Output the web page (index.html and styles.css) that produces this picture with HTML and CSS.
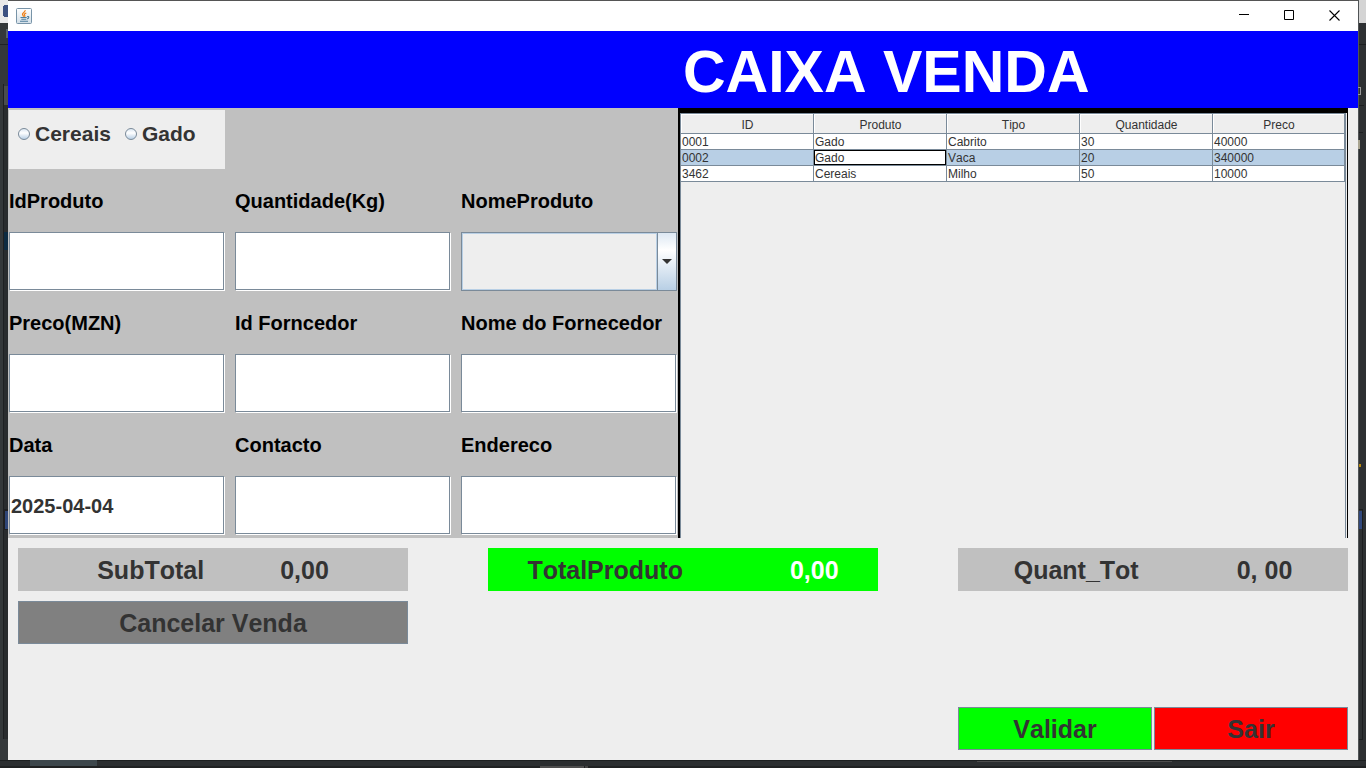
FILE: index.html
```html
<!DOCTYPE html>
<html lang="pt">
<head>
<meta charset="utf-8">
<title>Caixa Venda</title>
<link rel="stylesheet" href="styles.css">
</head>
<body class="desktop">
<svg class="edge edge-left" width="8" height="768" viewBox="0 0 8 768" aria-hidden="true" shape-rendering="crispEdges">
  <rect width="8" height="23" fill="#e9e9e9"/>
  <rect x="3" y="5" width="6" height="12" rx="3" fill="#3d5282"/>
  <rect y="23" width="8" height="745" fill="#34383a"/>
  <rect x="6" y="29" width="2" height="9" fill="#5a6470"/>
  <rect y="44" width="8" height="1" fill="#202224"/>
  <rect x="3" y="84" width="1" height="655" fill="#1e2022"/>
  <rect x="4" y="86" width="4" height="19" fill="#4a4d4e"/>
  <rect x="4" y="105" width="4" height="634" fill="#292c2e"/>
  <rect x="4" y="232" width="4" height="18" fill="#0d2b42"/>
  <rect x="4" y="509" width="4" height="21" fill="#1e2022"/>
  <rect x="5" y="511" width="3" height="18" fill="#2e4678"/>
</svg>
<svg class="edge edge-right" width="8" height="768" viewBox="0 0 8 768" aria-hidden="true" shape-rendering="crispEdges">
  <rect width="8" height="23" fill="#d4d4d4"/>
  <rect y="23" width="8" height="745" fill="#2d3032"/>
  <rect width="1" height="768" fill="#505456"/>
  <path d="M1 44h7M1 105h5M1 132h4" stroke="#1c1e20"/>
  <path d="M0 87.500h2.500v7h-2.500" fill="none" stroke="#999"/>
  <rect y="140" width="2" height="9" fill="#a8a490"/>
  <rect x="1" y="464" width="2" height="3" fill="#b8890c"/>
  <path d="M1 509.500h3.500v230h-3.500" fill="none" stroke="#1c1e20"/>
  <rect x="1" y="511" width="3" height="18" fill="#30487c"/>
</svg>
<div class="window">
  <header class="titlebar">
    <svg width="16" height="16" viewBox="0 0 16 16" role="img" aria-label="Java">
      <defs><linearGradient id="ic" x2="0" y2="1"><stop stop-color="#fff"/><stop offset="1" stop-color="#d3dfe8"/></linearGradient></defs>
      <rect x=".5" y=".5" width="15" height="15" rx="1" fill="url(#ic)" stroke="#7894a8"/>
      <path d="M9.200 2.200C9.500 4 6.200 4.800 6.500 6.400c.1.900 1 1.300 1 2.300M10.300 5C8.500 5.600 7.900 6.400 8.700 7.300c.4.600.2 1-.2 1.500" fill="none" stroke="#ef7d12" stroke-width="1.200"/>
      <path d="M4.500 9.500h6.200M5.300 11.200h5M4 13.200h8M11 8.700c2-.8 2.800 1.200.1 2.300" fill="none" stroke="#4f7f9e" stroke-width="1.100"/>
    </svg>
    <div class="controls">
      <button class="control" type="button" aria-label="Minimizar"><svg width="11" height="11" viewBox="0 0 11 11"><path d="M0 4.500h10" stroke="#000"/></svg></button>
      <button class="control" type="button" aria-label="Maximizar"><svg width="11" height="11" viewBox="0 0 11 11"><path d="M.5.500h9v9h-9z" fill="none" stroke="#000"/></svg></button>
      <button class="control" type="button" aria-label="Fechar"><svg width="11" height="11" viewBox="0 0 11 11"><path d="M.5.500l10 10M10.500.500l-10 10" stroke="#000" stroke-width="1.100"/></svg></button>
    </div>
  </header>
  <div class="banner"><h1 class="banner-title">CAIXA VENDA</h1></div>
  <main class="content">
    <form class="form">
      <div class="kinds">
        <label class="kind"><input class="radio" type="radio" name="kind">Cereais</label>
        <label class="kind"><input class="radio" type="radio" name="kind">Gado</label>
      </div>
      <label class="label first" for="id">IdProduto</label>
      <label class="label" for="qty">Quantidade(Kg)</label>
      <label class="label" for="name">NomeProduto</label>
      <input class="field" id="id" type="text">
      <input class="field" id="qty" type="text">
      <div class="combo">
        <select class="select" id="name"><option></option></select>
        <svg class="combo-arrow" width="10" height="5" viewBox="0 0 10 5" aria-hidden="true"><path d="M0 0h10L5 5z" fill="#333"/></svg>
      </div>
      <label class="label" for="price">Preco(MZN)</label>
      <label class="label" for="supplier-id">Id Forncedor</label>
      <label class="label" for="supplier">Nome do Fornecedor</label>
      <input class="field" id="price" type="text">
      <input class="field" id="supplier-id" type="text">
      <input class="field" id="supplier" type="text">
      <label class="label" for="date">Data</label>
      <label class="label" for="contact">Contacto</label>
      <label class="label" for="address">Endereco</label>
      <input class="field" id="date" type="text" value="2025-04-04">
      <input class="field" id="contact" type="text">
      <input class="field" id="address" type="text">
    </form>
    <section class="list">
      <div class="scroll">
        <table class="table">
          <thead><tr><th>ID</th><th>Produto</th><th>Tipo</th><th>Quantidade</th><th>Preco</th></tr></thead>
          <tbody>
            <tr><td>0001</td><td>Gado</td><td>Cabrito</td><td>30</td><td>40000</td></tr>
            <tr class="selected"><td>0002</td><td class="focused">Gado</td><td>Vaca</td><td>20</td><td>340000</td></tr>
            <tr><td>3462</td><td>Cereais</td><td>Milho</td><td>50</td><td>10000</td></tr>
          </tbody>
        </table>
      </div>
    </section>
  </main>
  <footer class="summary">
    <div class="total total-sub"><span>SubTotal</span><span>0,00</span></div>
    <div class="total total-product"><span>TotalProduto</span><span class="amount">0,00</span></div>
    <div class="total total-quantity"><span>Quant_Tot</span><span>0, 00</span></div>
    <button class="button cancel" type="button">Cancelar Venda</button>
    <div class="actions">
      <button class="button confirm" type="button">Validar</button>
      <button class="button exit" type="button">Sair</button>
    </div>
  </footer>
</div>
<svg class="edge edge-bottom" width="1366" height="8" viewBox="0 0 1366 8" aria-hidden="true" shape-rendering="crispEdges">
  <rect width="1366" height="8" fill="#2b2e30"/>
  <rect width="1366" height="1" fill="#1c1f20"/>
  <rect y="6" width="1366" height="2" fill="#1f2122"/>
  <rect x="30" width="67" height="6" fill="#3d474c"/>
  <rect x="977" y="1" width="195" height="1" fill="#4c4c4c"/>
  <rect x="540" y="6" width="44" height="2" fill="#4e4e4e"/>
  <rect x="585" y="6" width="3" height="2" fill="#444"/>
</svg>
</body>
</html>
```
FILE: styles.css
```css
* {
  box-sizing: border-box;
}

.desktop {
  display: flex;
  flex-direction: column;
  position: relative;
  min-height: 100vh;
  margin: 0;
  padding: 0 8px 8px;
  overflow: hidden;
  background: #2d3032;
  font-family: "Liberation Sans", Arial, sans-serif;
  font-kerning: none;
  color: #333;
}

/* Slivers of the editor behind the window */
.edge {
  position: absolute;
}

.edge-left {
  top: 0;
  left: 0;
}

.edge-right {
  top: 0;
  right: 0;
}

.edge-bottom {
  bottom: 0;
  left: 0;
}

.window {
  display: flex;
  flex: 1;
  flex-direction: column;
  border-top: 1px solid #555;
  background: #eee;
}

.titlebar {
  display: flex;
  align-items: center;
  justify-content: space-between;
  height: 30px;
  padding: 0 1px 0 8px;
  background: #fff;
}

.controls {
  display: flex;
  height: 100%;
  padding-bottom: 1px;
}

.control {
  display: flex;
  align-items: center;
  justify-content: center;
  width: 45px;
  padding: 0;
  border: 0;
  background: none;
}

.banner {
  display: grid;
  grid-template-columns: 1fr 1fr;
  align-items: center;
  height: 77px;
  padding-top: 4px;
  background: #00f;
}

.banner-title {
  grid-column: 2;
  margin: 0;
  color: #fff;
  font-size: 59px;
  line-height: 72px;
  white-space: nowrap;
}

.content {
  display: grid;
  grid-template-columns: 1fr 1fr;
  padding-right: 10px;
}

.form {
  display: grid;
  grid-template-columns: repeat(3, minmax(0, 1fr));
  grid-auto-rows: 59px;
  gap: 2px 10px;
  padding: 2px 1px 3px;
  background: silver;
}

.kinds {
  display: flex;
  align-items: flex-start;
  gap: 14px;
  padding: 12px 9px;
  background: #eee;
}

.kind {
  display: flex;
  align-items: center;
  gap: 5px;
  font-size: 21px;
  font-weight: bold;
  line-height: 24px;
}

.radio {
  width: 12px;
  height: 12px;
  margin: 0;
  border: 1px solid #7a8a99;
  border-radius: 50%;
  appearance: none;
  background: linear-gradient(#dde8f3, #fff 40%, #b8cfe5);
}

.label {
  align-self: center;
  color: #000;
  font-size: 20px;
  font-weight: bold;
  line-height: 24px;
  white-space: nowrap;
}

.label.first {
  grid-column: 1;
}

.field {
  min-width: 0;
  margin: 0 1px 1px 0;
  padding: 2px 1px 0;
  border: 1px solid #7a8a99;
  border-radius: 0;
  outline: 0;
  background: #fff;
  box-shadow: 1px 1px 0 #fff;
  color: #333;
  font: bold 20px "Liberation Sans", Arial, sans-serif;
}

.combo {
  display: flex;
  position: relative;
  border: 1px solid #7a8a99;
  background: linear-gradient(#dde8f3, #fff 30%, #b8cfe5);
}

.select {
  flex: 1;
  margin-right: 19px;
  border: 1px solid #b8cfe5;
  border-radius: 0;
  outline: 0;
  appearance: none;
  background: #eee;
  box-shadow: 1px 0 0 #7a8a99;
}

.combo-arrow {
  position: absolute;
  top: 26px;
  right: 4px;
  pointer-events: none;
}

.list {
  display: flex;
  padding: 5px 1px 0 2px;
  background: #000;
}

.scroll {
  flex: 1;
  padding: 1px 1px 0;
  border-right: 1px solid #eee;
  background: #eee;
  box-shadow: inset 1px 1px 0 #7a8a99, inset -1px 0 0 #7a8a99;
}

.table {
  width: 100%;
  table-layout: fixed;
  border-collapse: separate;
  border-spacing: 0;
  font-size: 12px;
  line-height: 14px;
}

.table th {
  width: 133px;
  height: 20px;
  padding: 3px 0 0 1px;
  border-right: 1px solid #7a8a99;
  border-bottom: 1px solid #7a8a99;
  box-shadow: inset 1px 1px 0 #fff;
  font-weight: normal;
}

.table th:last-child {
  width: auto;
}

.table td {
  height: 16px;
  padding: 1px 1px 0;
  border-right: 1px solid #7a8a99;
  border-bottom: 1px solid #7a8a99;
  background: #fff;
}

.table .selected td {
  background: #b8cfe5;
}

.table .selected .focused {
  background: #fff;
  box-shadow: inset 0 0 0 1px #000;
}

.summary {
  display: grid;
  flex: 1;
  grid-template-columns: repeat(3, minmax(0, 1fr));
  grid-auto-rows: 43px;
  gap: 10px 80px;
  padding: 10px;
  font-size: 25px;
  font-weight: bold;
}

.total {
  display: flex;
  align-items: center;
  justify-content: center;
  padding-top: 2px;
  background: silver;
}

.total-sub {
  gap: 76px;
}

.total-product {
  gap: 107px;
  background: #0f0;
}

.total-quantity {
  gap: 98px;
}

.amount {
  color: #fff;
}

.button {
  padding: 2px 0 0;
  border: 1px solid #7a8a99;
  color: #333;
  font: inherit;
  font-kerning: none;
}

.cancel {
  background: gray;
}

.actions {
  display: grid;
  grid-row: 4;
  grid-column: 3;
  grid-template-columns: 1fr 1fr;
  gap: 2px;
}

.confirm {
  background: #0f0;
}

.exit {
  background: #f00;
}
```
